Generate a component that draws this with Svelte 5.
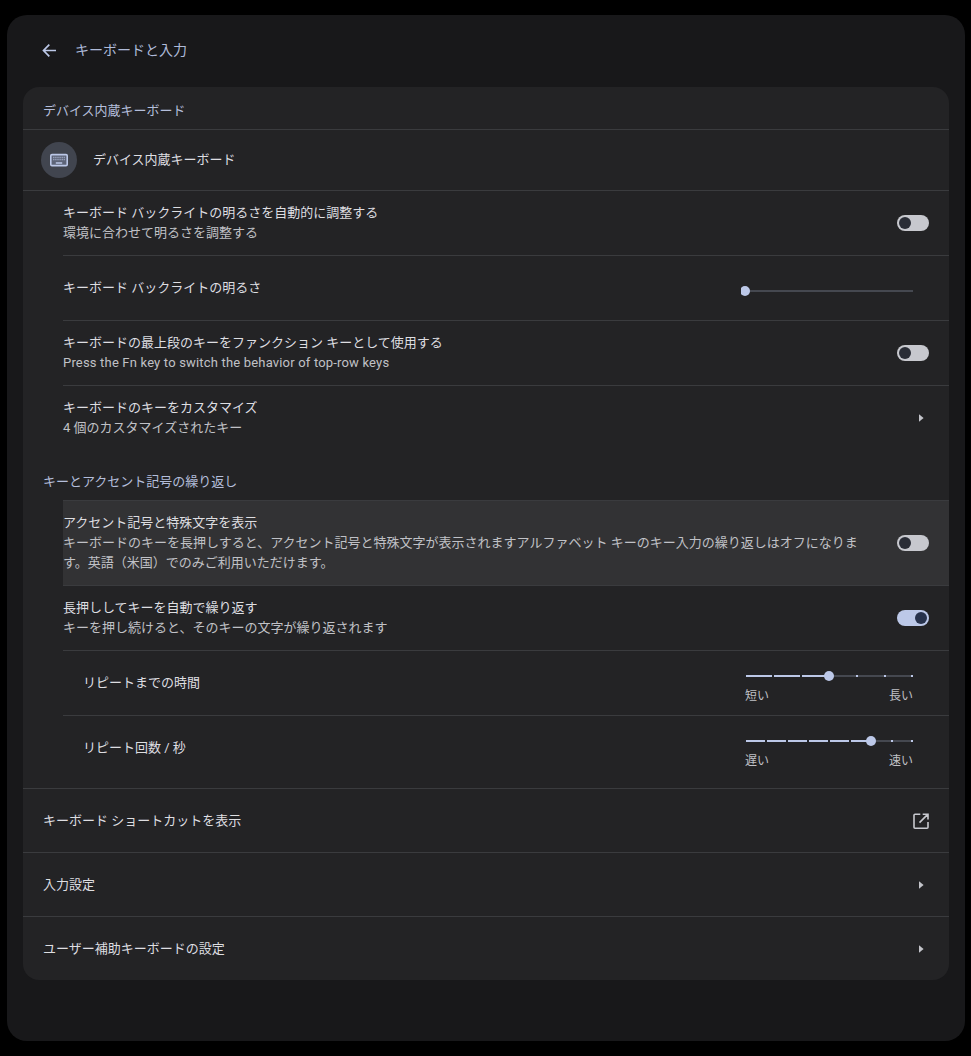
<script>
  const short = { ticks: 6, value: 3 };
  const fast = { ticks: 8, value: 6 };
  const tickList = (n) => Array.from({ length: n + 1 }, (_, i) => i);
  const W = 168;
</script>

{#snippet toggle(on)}
  <span class="toggle" class:on><span class="knob"></span></span>
{/snippet}

{#snippet chevron()}
  <svg class="chev" width="20" height="20" viewBox="0 0 20 20"><path d="M8 6.200l4.600 3.800L8 13.800z" fill="#c3c4ca" /></svg>
{/snippet}

{#snippet slider(s)}
  <svg class="slider" width="176" height="12" viewBox="-4 -6 176 12">
    <line x1="-1" y1="0" x2={W} y2="0" stroke="#454850" stroke-width="2" />
    <line x1="-1" y1="0" x2={(W * s.value) / s.ticks} y2="0" stroke="#bcc8e8" stroke-width="2" />
    {#each tickList(s.ticks) as i}
      <rect x={Math.min((W * i) / s.ticks - 1, W - 2)} y="-1" width="2" height="2" fill={i < s.value ? '#23252b' : '#bcc8e8'} />
    {/each}
    <circle cx={(W * s.value) / s.ticks} cy="0" r="5" fill="#bcc8e8" />
  </svg>
{/snippet}

<div class="window">
  <header class="top">
    <svg width="20" height="20" viewBox="0 0 20 20"><path d="M17 9.500H4.500M10.300 3.700 4.500 9.500l5.800 5.800" fill="none" stroke="#bcc8e8" stroke-width="1.700" /></svg>
    <h1>キーボードと入力</h1>
  </header>

  <main class="card">
    <h2 class="sec first">デバイス内蔵キーボード</h2>
    <div class="device">
      <span class="badge">
        <svg width="20" height="20" viewBox="0 0 20 20">
          <rect x="1.800" y="4.600" width="16.400" height="11" rx="1.200" fill="#5d6478" stroke="#bcc8e8" stroke-width="1.600" />
          <path d="M4.200 7.500h11.600M4.200 9.700h11.600" stroke="#a3adc9" stroke-width="1.300" stroke-dasharray="1.200 .9" />
          <path d="M6.800 12.900h6.400" stroke="#bcc8e8" stroke-width="1.500" />
        </svg>
      </span>
      <span class="t">デバイス内蔵キーボード</span>
    </div>

    <div class="row sub">
      <div class="txt"><div class="t">キーボード バックライトの明るさを自動的に調整する</div><div class="d">環境に合わせて明るさを調整する</div></div>
      {@render toggle(false)}
    </div>
    <div class="row sub sep single">
      <div class="txt"><div class="t">キーボード バックライトの明るさ</div></div>
      <div class="sl-wrap">{@render slider({ ticks: 0.0001, value: 0 })}</div>
    </div>
    <div class="row sub sep">
      <div class="txt"><div class="t">キーボードの最上段のキーをファンクション キーとして使用する</div><div class="d latin">Press the Fn key to switch the behavior of top-row keys</div></div>
      {@render toggle(false)}
    </div>
    <div class="row sub sep">
      <div class="txt"><div class="t">キーボードのキーをカスタマイズ</div><div class="d">4 個のカスタマイズされたキー</div></div>
      {@render chevron()}
    </div>

    <h2 class="sec second">キーとアクセント記号の繰り返し</h2>
    <div class="row sub hl">
      <div class="txt long"><div class="t">アクセント記号と特殊文字を表示</div><div class="d">キーボードのキーを長押しすると、アクセント記号と特殊文字が表示されますアルファベット キーのキー入力の繰り返しはオフになります。英語（米国）でのみご利用いただけます。</div></div>
      {@render toggle(false)}
    </div>
    <div class="row sub">
      <div class="txt"><div class="t">長押ししてキーを自動で繰り返す</div><div class="d">キーを押し続けると、そのキーの文字が繰り返されます</div></div>
      {@render toggle(true)}
    </div>
    <div class="row sub sep rep">
      <div class="txt"><div class="t">リピートまでの時間</div></div>
      <div class="sl-col">{@render slider(short)}<div class="labels"><span>短い</span><span>長い</span></div></div>
    </div>
    <div class="row sub sep rep last">
      <div class="txt"><div class="t">リピート回数 / 秒</div></div>
      <div class="sl-col">{@render slider(fast)}<div class="labels"><span>遅い</span><span>速い</span></div></div>
    </div>

    <div class="link"><span class="t">キーボード ショートカットを表示</span>
      <svg width="20" height="20" viewBox="0 0 20 20" class="ext"><path d="M9.300 3.200H4c-.7 0-1 .4-1 1v12c0 .6.4 1 1 1h12c.6 0 1-.4 1-1v-5.200M11.700 3.200H17V8.500M16.700 3.400 8.500 11.600" fill="none" stroke="#c8c9cf" stroke-width="1.600" /></svg>
    </div>
    <div class="link"><span class="t">入力設定</span>{@render chevron()}</div>
    <div class="link"><span class="t">ユーザー補助キーボードの設定</span>{@render chevron()}</div>
  </main>
</div>

<style>
  :global(body) {
    margin: 0;
    background: #000;
  }
  .window {
    box-sizing: border-box;
    width: 958px;
    height: 1026px;
    margin: 15px 0 15px 7px;
    padding: 0 16px;
    background: #18181a;
    border-radius: 20px;
    font-family: Roboto, 'Noto Sans CJK JP', sans-serif;
    color: #dedee1;
    font-size: 13px;
    line-height: 20px;
  }
  .top {
    height: 72px;
    display: flex;
    align-items: center;
    padding-left: 16px;
    gap: 16px;
  }
  .top svg { flex: none; }
  h1 {
    margin: 0 0 2px;
    font-size: 14px;
    font-weight: 400;
    color: #bcc8e8;
    opacity: .92;
  }
  .card {
    height: 893px;
    background: #232325;
    border-radius: 16px;
    display: flex;
    flex-direction: column;
    overflow: hidden;
  }
  .sec {
    margin: 0;
    padding-left: 20px;
    font-size: 13px;
    font-weight: 400;
    color: #b4bedb;
  }
  .sec.first {
    height: 42px;
    line-height: 48px;
    border-bottom: 1px solid #3a3b3e;
  }
  .sec.second {
    height: 50px;
    line-height: 64px;
  }
  .device {
    height: 60px;
    display: flex;
    align-items: center;
    padding-left: 18px;
    gap: 16px;
    border-bottom: 1px solid #3a3b3e;
  }
  .badge {
    width: 36px;
    height: 36px;
    border-radius: 50%;
    background: #41454f;
    display: flex;
    align-items: center;
    justify-content: center;
  }
  .row {
    display: flex;
    align-items: center;
    justify-content: space-between;
    height: 64px;
    padding-right: 20px;
  }
  .row.sub { margin-left: 40px; }
  .row.sep {
    height: 65px;
    box-sizing: border-box;
    border-top: 1px solid #3a3b3e;
  }
  .row.hl {
    height: 86px;
    box-sizing: border-box;
    background: #323234;
    border-top: 1px solid #3a3b3e;
    border-bottom: 1px solid #3a3b3e;
  }
  .row.single, .rep { align-items: flex-start; }
  .row.single .txt, .rep .txt { padding-top: 22px; }
  .rep .txt { padding-left: 20px; }
  .row.rep.last { height: 73px; }
  .t { color: #dedee1; }
  .d { color: #c0c1c6; }
  .latin { letter-spacing: .18px; }
  .txt.long { width: 800px; }
  .toggle {
    flex: none;
    width: 32px;
    height: 16px;
    border-radius: 8px;
    background: #c7c8ce;
    display: flex;
    align-items: center;
    padding: 0 2px;
    box-sizing: border-box;
  }
  .toggle .knob {
    width: 12px;
    height: 12px;
    border-radius: 50%;
    background: #2a2d36;
  }
  .toggle.on {
    background: #bcc8e8;
    justify-content: flex-end;
  }
  .toggle.on .knob { background: #27324c; }
  .chev { flex: none; margin-right: -2px; }
  .link .chev { margin-right: 0; }
  .sl-wrap {
    margin-right: 12px;
    padding-top: 29px;
  }
  .sl-col {
    width: 176px;
    margin-right: 12px;
    padding-top: 19px;
  }
  .slider { display: block; }
  .labels {
    display: flex;
    justify-content: space-between;
    padding: 4px 4px 0;
    color: #c0c1c6;
    font-size: 12px;
  }
  .link {
    flex: 1;
    display: flex;
    align-items: center;
    justify-content: space-between;
    padding: 0 18px 0 20px;
    border-top: 1px solid #3a3b3e;
  }
  .ext { flex: none; }
</style>
